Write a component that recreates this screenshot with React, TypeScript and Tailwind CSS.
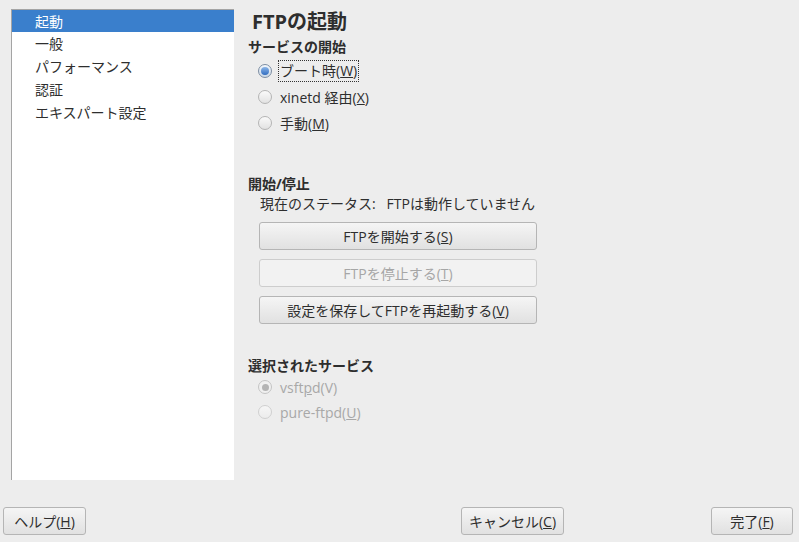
import React from "react";

const font = { fontFamily: '"Open Sans", "Noto Sans CJK JP", sans-serif' };

function Radio({ checked, disabled }: { checked?: boolean; disabled?: boolean }) {
  if (checked && !disabled) {
    return (
      <span className="inline-flex w-[14px] h-[14px] rounded-full border border-[#7d8ea3] items-center justify-center bg-gradient-to-b from-[#f4f8fc] to-[#c9d7e6]">
        <span className="w-[8px] h-[8px] rounded-full bg-gradient-to-b from-[#8cb6e8] to-[#2f6cc0]" />
      </span>
    );
  }
  if (checked && disabled) {
    return (
      <span className="inline-flex w-[14px] h-[14px] rounded-full border border-[#c4c4c4] items-center justify-center bg-[#f0f0f0]">
        <span className="w-[7px] h-[7px] rounded-full bg-[#b4b4b4]" />
      </span>
    );
  }
  return (
    <span
      className={
        "inline-flex w-[14px] h-[14px] rounded-full border bg-gradient-to-b " +
        (disabled ? "border-[#d0d0d0] from-[#f6f6f6] to-[#ececec]" : "border-[#b4b4b4] from-[#fafafa] to-[#e2e2e2]")
      }
    />
  );
}

function Btn({ children, disabled, className }: { children: React.ReactNode; disabled?: boolean; className?: string }) {
  return (
    <div
      className={
        "h-[28px] flex items-center justify-center rounded-[3px] border text-[14px] " +
        (disabled
          ? "border-[#cdcdcd] bg-[#f2f2f2] text-[#a6a6a6] "
          : "border-[#b5b5b5] bg-gradient-to-b from-[#f5f5f5] to-[#e1e1e1] text-[#2e2e2e] ") +
        (className || "")
      }
    >
      {children}
    </div>
  );
}

export default function App() {
  const items = ["起動", "一般", "パフォーマンス", "認証", "エキスパート設定"];
  return (
    <div className="w-[799px] h-[542px] bg-[#ededed] text-[#2e2e2e] flex flex-col" style={font}>
      <div className="flex h-[480px] pt-[9px] pl-[11px]">
        <div className="w-[223px] h-[471px] bg-white border-l border-t border-[#a4a4a4] flex flex-col">
          {items.map((t, i) => (
            <div
              key={t}
              className={
                "flex items-center pl-[23px] text-[14px] " +
                (i === 0 ? "bg-[#3a7fcc] text-white h-[22px]" : "text-[#2e2e2e] h-[23px]")
              }
            >
              {t}
            </div>
          ))}
        </div>
        <div className="flex flex-col pl-[14px] w-[330px]">
          <div className="text-[20px] font-bold leading-[26px] pl-[4px] text-[#2e2e2e]">FTPの起動</div>
          <div className="text-[14px] font-bold leading-[20px] mt-[2px]">サービスの開始</div>
          <div className="flex flex-col pl-[10px] mt-[1px]">
            <div className="h-[26px] flex items-center gap-[6px]">
              <Radio checked />
              <span className="border border-dotted border-[#333] px-[1px] leading-[20px] text-[14px]">
                ブート時(<span className="underline">W</span>)
              </span>
            </div>
            <div className="h-[26px] flex items-center gap-[8px] text-[14px]">
              <Radio />
              <span>
                xinetd 経由(<span className="underline">X</span>)
              </span>
            </div>
            <div className="h-[26px] flex items-center gap-[8px] text-[14px]">
              <Radio />
              <span>
                手動(<span className="underline">M</span>)
              </span>
            </div>
          </div>
          <div className="text-[14px] font-bold leading-[20px] mt-[38px]">開始/停止</div>
          <div className="text-[14px] leading-[18px] pl-[12px] mt-[1px]">
            現在のステータス:&nbsp;&nbsp;&nbsp;FTPは動作していません
          </div>
          <div className="flex flex-col gap-[9px] pl-[11px] mt-[9px] w-[289px]">
            <Btn>
              FTPを開始する(<span className="underline">S</span>)
            </Btn>
            <Btn disabled>
              FTPを停止する(<span className="underline">T</span>)
            </Btn>
            <Btn>
              設定を保存してFTPを再起動する(<span className="underline">V</span>)
            </Btn>
          </div>
          <div className="text-[14px] font-bold leading-[20px] mt-[32px]">選択されたサービス</div>
          <div className="flex flex-col pl-[10px] text-[14px] text-[#a8a8a8]">
            <div className="h-[22px] flex items-center gap-[8px]">
              <Radio checked disabled />
              <span>
                vsft<span className="underline">p</span>d(V)
              </span>
            </div>
            <div className="h-[28px] flex items-center gap-[8px]">
              <Radio disabled />
              <span>
                pure-ftpd(<span className="underline">U</span>)
              </span>
            </div>
          </div>
        </div>
      </div>
      <div className="flex items-start pt-[27px] px-[3px]">
        <Btn className="w-[83px]">
          ヘルプ(<span className="underline">H</span>)
        </Btn>
        <Btn className="w-[103px] ml-[375px]">
          キャンセル(<span className="underline">C</span>)
        </Btn>
        <Btn className="w-[82px] ml-[147px]">
          完了(<span className="underline">F</span>)
        </Btn>
      </div>
    </div>
  );
}
